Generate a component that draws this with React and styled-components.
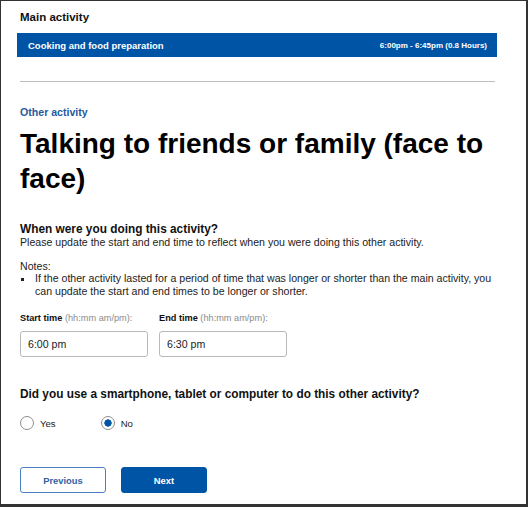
import React from "react";
import styled, { createGlobalStyle } from "styled-components";

const Global = createGlobalStyle`
  html, body { margin: 0; padding: 0; background: #fff; }
  body { font-family: "Liberation Sans", Arial, sans-serif; color: #111; }
  * { box-sizing: border-box; }
`;

const Frame = styled.div`
  width: 528px;
  height: 507px;
  border-style: solid;
  border-color: #333;
  border-width: 1px 2px 3px 1px;
  padding: 9px 31px 0 19px;
  display: flex;
  flex-direction: column;
  overflow: hidden;
`;

const SectionTitle = styled.div`
  font-size: 11.5px;
  line-height: 14px;
  font-weight: 700;
  color: #111;
`;

const ActivityBar = styled.div`
  margin: 9px -2px 0 -3px;
  height: 24px;
  background: #0054a6;
  color: #fff;
  display: flex;
  align-items: center;
  justify-content: space-between;
  padding: 0 10px 0 11px;
  font-weight: 700;
`;

const BarName = styled.span`
  font-size: 9.5px;
`;

const BarTime = styled.span`
  font-size: 8px;
`;

const Divider = styled.hr`
  margin: 24px 0 0;
  border: 0;
  height: 1px;
  background: #bdbdbd;
`;

const Eyebrow = styled.div`
  margin-top: 24px;
  font-size: 10.6px;
  line-height: 13px;
  font-weight: 700;
  color: #1f5b9f;
`;

const Heading = styled.h1`
  margin: 7px 0 0;
  font-size: 28px;
  line-height: 35px;
  font-weight: 700;
  color: #000;
`;

const Question = styled.div`
  margin-top: ${(p) => p.$top}px;
  font-size: 11.85px;
  line-height: 13px;
  font-weight: 700;
  color: #111;
`;

const Body = styled.div`
  margin-top: ${(p) => p.$top || 0}px;
  font-size: 10.6px;
  line-height: ${(p) => p.$lh || 13}px;
  color: #222;
`;

const NoteList = styled.ul`
  margin: 0 -8px 0 0;
  padding: 0;
  list-style: none;
`;

const NoteItem = styled.li`
  display: grid;
  grid-template-columns: 15px 1fr;
  font-size: 10.6px;
  line-height: 13px;
  color: #222;
`;

const Bullet = styled.span`
  position: relative;
  &::before {
    content: "";
    position: absolute;
    left: 1px;
    top: 6px;
    width: 3px;
    height: 3px;
    background: #222;
  }
`;

const Fields = styled.div`
  margin-top: 15px;
  display: flex;
  gap: 11px;
`;

const Field = styled.label`
  display: flex;
  flex-direction: column;
  gap: 7px;
`;

const FieldLabel = styled.span`
  font-size: 9.2px;
  line-height: 11px;
  font-weight: 700;
  color: #111;
`;

const Hint = styled.span`
  font-weight: 400;
  color: #8a8a8a;
`;

const TimeInput = styled.input`
  width: 128px;
  height: 26px;
  border: 1px solid #b9b9b9;
  border-radius: 3px;
  padding: 0 7px;
  font-family: "Liberation Sans", Arial, sans-serif;
  font-size: 10.6px;
  color: #222;
  background: #fff;
  outline: none;
`;

const RadioRow = styled.div`
  margin-top: 15px;
  display: flex;
  gap: 45px;
  align-items: center;
`;

const RadioOption = styled.label`
  display: flex;
  align-items: center;
  gap: 6px;
  font-size: 9.6px;
  color: #222;
`;

const RadioInput = styled.input`
  appearance: none;
  margin: 0;
  width: 14px;
  height: 14px;
  border-radius: 50%;
  border: 1px solid #8f8f8f;
  background: #fff;
  &:checked {
    background: radial-gradient(circle, #0054a6 0 3.4px, #fff 3.9px);
  }
`;

const Actions = styled.div`
  margin-top: 37px;
  display: flex;
  gap: 15px;
`;

const Button = styled.button`
  width: 86px;
  height: 26px;
  border-radius: 3px;
  font-family: "Liberation Sans", Arial, sans-serif;
  font-size: 9.4px;
  font-weight: 700;
  cursor: pointer;
  border: 1px solid ${(p) => (p.$primary ? "#0054a6" : "#4a7fc0")};
  background: ${(p) => (p.$primary ? "#0054a6" : "#fff")};
  color: ${(p) => (p.$primary ? "#fff" : "#2f5fa5")};
`;

export default function App() {
  return (
    <>
      <Global />
      <Frame>
        <SectionTitle>Main activity</SectionTitle>
        <ActivityBar>
          <BarName>Cooking and food preparation</BarName>
          <BarTime>6:00pm - 6:45pm (0.8 Hours)</BarTime>
        </ActivityBar>
        <Divider />
        <Eyebrow>Other activity</Eyebrow>
        <Heading>Talking to friends or family (face to face)</Heading>
        <Question $top={27}>When were you doing this activity?</Question>
        <Body>
          Please update the start and end time to reflect when you were doing
          this other activity.
        </Body>
        <Body $top={11} $lh={12}>
          Notes:
        </Body>
        <NoteList>
          <NoteItem>
            <Bullet />
            <span>
              If the other activity lasted for a period of time that was longer
              or shorter than the main activity, you can update the start and
              end times to be longer or shorter.
            </span>
          </NoteItem>
        </NoteList>
        <Fields>
          <Field>
            <FieldLabel>
              Start time <Hint>(hh:mm am/pm):</Hint>
            </FieldLabel>
            <TimeInput defaultValue="6:00 pm" />
          </Field>
          <Field>
            <FieldLabel>
              End time <Hint>(hh:mm am/pm):</Hint>
            </FieldLabel>
            <TimeInput defaultValue="6:30 pm" />
          </Field>
        </Fields>
        <Question $top={31}>
          Did you use a smartphone, tablet or computer to do this other
          activity?
        </Question>
        <RadioRow>
          <RadioOption>
            <RadioInput type="radio" name="device" />
            Yes
          </RadioOption>
          <RadioOption>
            <RadioInput type="radio" name="device" defaultChecked />
            No
          </RadioOption>
        </RadioRow>
        <Actions>
          <Button>Previous</Button>
          <Button $primary>Next</Button>
        </Actions>
      </Frame>
    </>
  );
}
